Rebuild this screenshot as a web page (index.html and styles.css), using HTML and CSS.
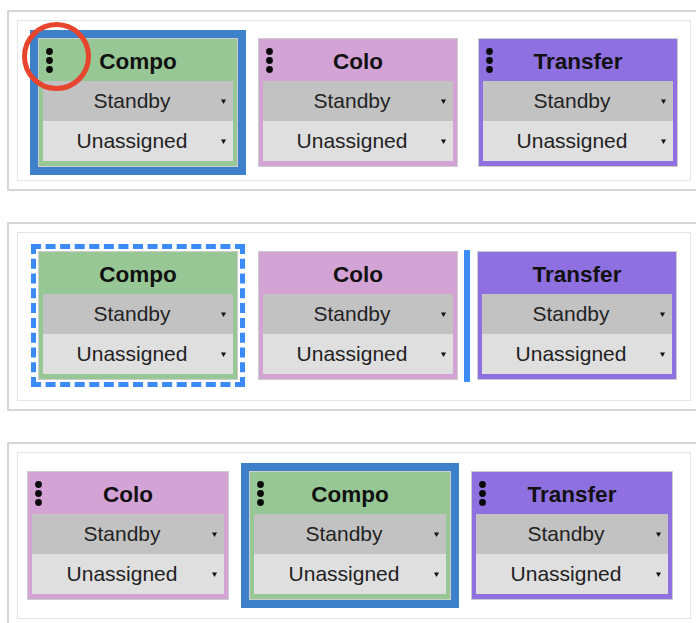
FILE: index.html
```html
<!DOCTYPE html>
<html>
<head>
<meta charset="utf-8">
<link rel="stylesheet" href="styles.css">
</head>
<body>
<div class="page">

  <section class="frame">
    <div class="board board-1">
      <div class="card green selected">
        <svg class="handle" width="7" height="25" viewBox="0 0 7 25"><circle cx="3.5" cy="3.5" r="3.4"/><circle cx="3.5" cy="12.5" r="3.4"/><circle cx="3.5" cy="21.5" r="3.4"/></svg>
        <div class="ring"></div>
        <div class="title">Compo</div>
        <div class="select dark"><span class="label">Standby</span><svg class="arrow" width="5" height="5" viewBox="0 0 5 5"><polygon points="0,0.5 5,0.5 2.5,5"/></svg></div>
        <div class="select light"><span class="label">Unassigned</span><svg class="arrow" width="5" height="5" viewBox="0 0 5 5"><polygon points="0,0.5 5,0.5 2.5,5"/></svg></div>
      </div>
      <div class="card pink">
        <svg class="handle" width="7" height="25" viewBox="0 0 7 25"><circle cx="3.5" cy="3.5" r="3.4"/><circle cx="3.5" cy="12.5" r="3.4"/><circle cx="3.5" cy="21.5" r="3.4"/></svg>
        <div class="title">Colo</div>
        <div class="select dark"><span class="label">Standby</span><svg class="arrow" width="5" height="5" viewBox="0 0 5 5"><polygon points="0,0.5 5,0.5 2.5,5"/></svg></div>
        <div class="select light"><span class="label">Unassigned</span><svg class="arrow" width="5" height="5" viewBox="0 0 5 5"><polygon points="0,0.5 5,0.5 2.5,5"/></svg></div>
      </div>
      <div class="card purple">
        <svg class="handle" width="7" height="25" viewBox="0 0 7 25"><circle cx="3.5" cy="3.5" r="3.4"/><circle cx="3.5" cy="12.5" r="3.4"/><circle cx="3.5" cy="21.5" r="3.4"/></svg>
        <div class="title">Transfer</div>
        <div class="select dark"><span class="label">Standby</span><svg class="arrow" width="5" height="5" viewBox="0 0 5 5"><polygon points="0,0.5 5,0.5 2.5,5"/></svg></div>
        <div class="select light"><span class="label">Unassigned</span><svg class="arrow" width="5" height="5" viewBox="0 0 5 5"><polygon points="0,0.5 5,0.5 2.5,5"/></svg></div>
      </div>
    </div>
  </section>

  <section class="frame">
    <div class="board board-2">
      <div class="card green placeholder">
        <div class="title">Compo</div>
        <div class="select dark"><span class="label">Standby</span><svg class="arrow" width="5" height="5" viewBox="0 0 5 5"><polygon points="0,0.5 5,0.5 2.5,5"/></svg></div>
        <div class="select light"><span class="label">Unassigned</span><svg class="arrow" width="5" height="5" viewBox="0 0 5 5"><polygon points="0,0.5 5,0.5 2.5,5"/></svg></div>
      </div>
      <div class="card pink">
        <div class="title">Colo</div>
        <div class="select dark"><span class="label">Standby</span><svg class="arrow" width="5" height="5" viewBox="0 0 5 5"><polygon points="0,0.5 5,0.5 2.5,5"/></svg></div>
        <div class="select light"><span class="label">Unassigned</span><svg class="arrow" width="5" height="5" viewBox="0 0 5 5"><polygon points="0,0.5 5,0.5 2.5,5"/></svg></div>
      </div>
      <div class="drop-bar"></div>
      <div class="card purple">
        <div class="title">Transfer</div>
        <div class="select dark"><span class="label">Standby</span><svg class="arrow" width="5" height="5" viewBox="0 0 5 5"><polygon points="0,0.5 5,0.5 2.5,5"/></svg></div>
        <div class="select light"><span class="label">Unassigned</span><svg class="arrow" width="5" height="5" viewBox="0 0 5 5"><polygon points="0,0.5 5,0.5 2.5,5"/></svg></div>
      </div>
    </div>
  </section>

  <section class="frame">
    <div class="board board-3">
      <div class="card pink">
        <svg class="handle" width="7" height="25" viewBox="0 0 7 25"><circle cx="3.5" cy="3.5" r="3.4"/><circle cx="3.5" cy="12.5" r="3.4"/><circle cx="3.5" cy="21.5" r="3.4"/></svg>
        <div class="title">Colo</div>
        <div class="select dark"><span class="label">Standby</span><svg class="arrow" width="5" height="5" viewBox="0 0 5 5"><polygon points="0,0.5 5,0.5 2.5,5"/></svg></div>
        <div class="select light"><span class="label">Unassigned</span><svg class="arrow" width="5" height="5" viewBox="0 0 5 5"><polygon points="0,0.5 5,0.5 2.5,5"/></svg></div>
      </div>
      <div class="card green selected">
        <svg class="handle" width="7" height="25" viewBox="0 0 7 25"><circle cx="3.5" cy="3.5" r="3.4"/><circle cx="3.5" cy="12.5" r="3.4"/><circle cx="3.5" cy="21.5" r="3.4"/></svg>
        <div class="title">Compo</div>
        <div class="select dark"><span class="label">Standby</span><svg class="arrow" width="5" height="5" viewBox="0 0 5 5"><polygon points="0,0.5 5,0.5 2.5,5"/></svg></div>
        <div class="select light"><span class="label">Unassigned</span><svg class="arrow" width="5" height="5" viewBox="0 0 5 5"><polygon points="0,0.5 5,0.5 2.5,5"/></svg></div>
      </div>
      <div class="card purple">
        <svg class="handle" width="7" height="25" viewBox="0 0 7 25"><circle cx="3.5" cy="3.5" r="3.4"/><circle cx="3.5" cy="12.5" r="3.4"/><circle cx="3.5" cy="21.5" r="3.4"/></svg>
        <div class="title">Transfer</div>
        <div class="select dark"><span class="label">Standby</span><svg class="arrow" width="5" height="5" viewBox="0 0 5 5"><polygon points="0,0.5 5,0.5 2.5,5"/></svg></div>
        <div class="select light"><span class="label">Unassigned</span><svg class="arrow" width="5" height="5" viewBox="0 0 5 5"><polygon points="0,0.5 5,0.5 2.5,5"/></svg></div>
      </div>
    </div>
  </section>

</div>
</body>
</html>
```

FILE: styles.css
```css
html, body {
  margin: 0;
  padding: 0;
  background: #ffffff;
  overflow: hidden;
}

body {
  font-family: "Liberation Sans", Arial, sans-serif;
  color: #1c1c1c;
}

.page {
  padding: 10px 0 0 7px;
  display: flex;
  flex-direction: column;
  gap: 31px;
}

.frame {
  border: 2px solid #d6d6d6;
  border-right: none;
  padding: 8px 5px 8px 8px;
  background: #ffffff;
}

.board {
  border: 1px solid #e6e6e6;
  background: #ffffff;
  display: flex;
  align-items: flex-start;
}

.board-1 {
  padding: 17px 0 13px 20px;
  gap: 20px;
}

.board-2 {
  padding: 18px 0 20px 20px;
  gap: 20px;
}

.board-3 {
  padding: 18px 0 18px 9px;
  gap: 20px;
}

.card {
  position: relative;
  box-sizing: border-box;
  width: 200px;
  height: 129px;
  border: 1px solid #cdcdcd;
  padding: 0 4px 5px;
  flex: none;
}

.board-3 .card {
  width: 202px;
}

.green { background: #96c794; }
.pink { background: #d4a3d6; }
.purple { background: #8f70e0; }

.selected { box-shadow: 0 0 0 8px #3e80c9; }

.placeholder {
  outline: 5px dashed #3a8bf6;
  outline-offset: 2px;
}

.drop-bar {
  width: 6px;
  height: 132px;
  margin: -1px -13px -2px -14px;
  background: #3a8bf6;
  flex: none;
}

.handle {
  position: absolute;
  left: 7px;
  top: 8.5px;
  fill: #0a0a0a;
}

.ring {
  position: absolute;
  left: -17px;
  top: -17px;
  width: 69px;
  height: 69px;
  box-sizing: border-box;
  border: 5px solid #e8452e;
  border-radius: 50%;
}

.title {
  height: 42px;
  box-sizing: border-box;
  padding-top: 3px;
  line-height: 39px;
  margin: 0 -4px;
  text-align: center;
  font-weight: bold;
  font-size: 22.5px;
  color: #111111;
}

.select {
  height: 40px;
  display: flex;
  align-items: center;
  font-size: 21px;
  line-height: 40px;
  color: #222222;
}

.select.dark { background: #c2c2c2; }
.select.light { background: #dfdfdf; }

.label {
  flex: 1;
  text-align: center;
}

.arrow {
  flex: none;
  margin-right: 7px;
  fill: #111111;
}
```
